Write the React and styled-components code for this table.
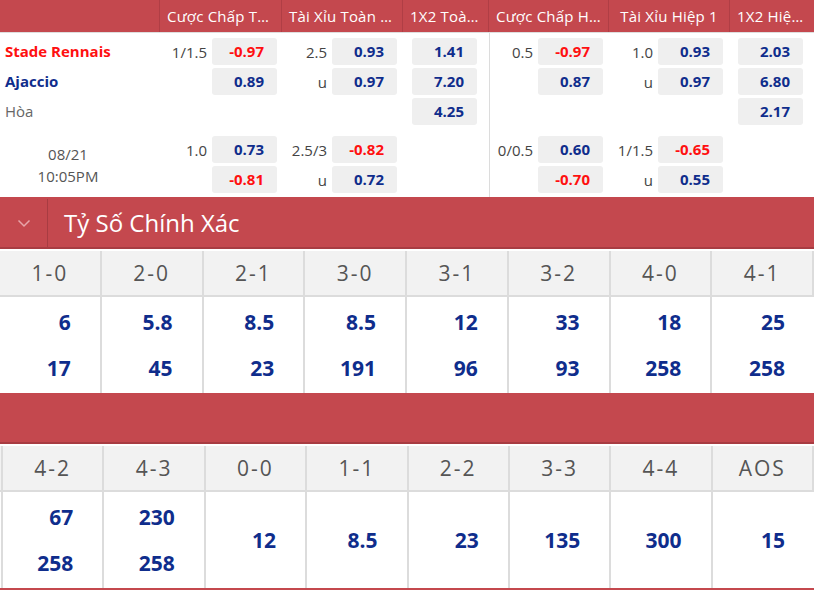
import React from "react";
import styled, { createGlobalStyle } from "styled-components";

const GlobalStyle = createGlobalStyle`
  html, body {
    margin: 0;
    padding: 0;
    background: #ffffff;
    font-family: "Open Sans", "Noto Sans", "DejaVu Sans", sans-serif;
  }
`;

const RED = "#c4484e";
const RED_DARK = "#a83c42";
const BLUE = "#0f2d8c";

const Page = styled.div`
  width: 814px;
  height: 590px;
  overflow: hidden;
`;

/* ---------- odds table ---------- */

const OddsTable = styled.div`
  border-bottom: 2px solid ${RED};
`;

const HeaderRow = styled.div`
  display: flex;
  height: 32px;
  background: ${RED};
  border-bottom: 1px solid #dedede;
`;

const HeadCell = styled.div`
  width: ${(p) => p.w}px;
  flex: none;
  box-sizing: border-box;
  border-right: ${(p) => (p.last ? "none" : "1px solid #b03e45")};
  color: #ffffff;
  font-size: 15px;
  letter-spacing: 0.2px;
  line-height: 32px;
  padding: 0 7px;
  text-align: center;
  white-space: nowrap;
  overflow: hidden;
  text-overflow: ellipsis;
`;

const Body = styled.div`
  display: flex;
  height: 164px;
`;

const Group = styled.div`
  display: flex;
  border-left: ${(p) => (p.divider ? "1px solid #dcdcdc" : "none")};
`;

const Column = styled.div`
  width: ${(p) => p.w}px;
  flex: none;
  box-sizing: border-box;
  padding: 5px ${(p) => p.pr}px 0 ${(p) => p.pl || 0}px;
  display: flex;
  flex-direction: column;
  gap: 11px;
`;

const Block = styled.div`
  display: flex;
  flex-direction: column;
  gap: 3px;
`;

const Slot = styled.div`
  height: 27px;
  display: flex;
  align-items: center;
  justify-content: ${(p) => (p.start ? "flex-start" : "flex-end")};
  gap: 5px;
`;

const Line = styled.span`
  font-size: 15px;
  color: #444444;
`;

const Price = styled.div`
  width: 65px;
  height: 27px;
  box-sizing: border-box;
  background: #efefef;
  border-radius: 3px;
  padding-right: 13px;
  text-align: right;
  line-height: 27px;
  font-size: 15px;
  font-weight: 700;
  color: ${(p) => (p.neg ? "#ff1010" : BLUE)};
`;

const TeamCol = styled.div`
  width: 160px;
  flex: none;
  padding-top: 5px;
  display: flex;
  flex-direction: column;
  gap: 11px;
`;

const Team = styled.div`
  height: 27px;
  line-height: 27px;
  padding-left: 5px;
  font-size: 15px;
  font-weight: ${(p) => (p.draw ? 400 : 700)};
  color: ${(p) => p.color};
`;

const DateBox = styled.div`
  height: 57px;
  display: flex;
  flex-direction: column;
  justify-content: center;
  align-items: center;
  color: #555555;
  font-size: 15px;
  line-height: 22px;
  padding-right: 24px;
`;

/* ---------- correct score ---------- */

const TitleBar = styled.div`
  display: flex;
  height: 48px;
  background: ${RED};
  border-bottom: 2px solid ${RED_DARK};
`;

const Toggle = styled.div`
  width: 47px;
  flex: none;
  border-right: 1px solid ${RED_DARK};
  display: flex;
  align-items: center;
  justify-content: center;
`;

const Title = styled.div`
  color: #ffffff;
  font-size: 24px;
  line-height: 48px;
  padding-left: 16px;
`;

const ScoreGrid = styled.div`
  display: grid;
  grid-template-columns: ${(p) => (p.lead ? `${p.lead}px ` : "")}repeat(8, 1fr);
  grid-template-rows: 46px 96px;
  background: #ffffff;
  border-top: 2px solid #ffffff;
`;

const ScoreHead = styled.div`
  background: #f2f2f2;
  border-right: 2px solid #dcdcdc;
  border-bottom: 2px solid #dcdcdc;
  color: #555555;
  font-size: 21px;
  display: flex;
  align-items: center;
  justify-content: center;
  letter-spacing: 2px;
  &:last-child {
    border-right: none;
  }
`;

const ScoreCell = styled.div`
  border-right: ${(p) => (p.last ? "none" : "2px solid #dcdcdc")};
  display: flex;
  flex-direction: column;
  justify-content: center;
  align-items: flex-end;
  padding-right: 29px;
`;

const ScoreValue = styled.div`
  font-size: 21px;
  font-weight: 700;
  color: ${BLUE};
  line-height: 46px;
`;

const Spacer = styled.div`
  border-right: 2px solid #dcdcdc;
  background: ${(p) => (p.head ? "#f2f2f2" : "#ffffff")};
  border-bottom: ${(p) => (p.head ? "2px solid #dcdcdc" : "none")};
`;

const EmptyBar = styled.div`
  height: 48px;
  background: ${RED};
  border-top: 1px solid ${RED};
  border-bottom: 2px solid ${RED_DARK};
`;

const BottomLine = styled.div`
  height: 2px;
  background: ${RED};
`;

const headers = [
  { t: "", w: 160 },
  { t: "Cược Chấp Toàn Trận", w: 122 },
  { t: "Tài Xỉu Toàn Trận", w: 121 },
  { t: "1X2 Toàn Trận", w: 86 },
  { t: "Cược Chấp Hiệp 1", w: 120 },
  { t: "Tài Xỉu Hiệp 1", w: 121 },
  { t: "1X2 Hiệp 1", w: 84 },
];

const full = [
  {
    w: 122, pr: 5,
    a: [{ l: "1/1.5", v: "-0.97" }, { v: "0.89" }, null],
    b: [{ l: "1.0", v: "0.73" }, { v: "-0.81" }],
  },
  {
    w: 121, pr: 6,
    a: [{ l: "2.5", v: "0.93" }, { l: "u", v: "0.97" }, null],
    b: [{ l: "2.5/3", v: "-0.82" }, { l: "u", v: "0.72" }],
  },
  {
    w: 86, pr: 0, pl: 9, start: true,
    a: [{ v: "1.41" }, { v: "7.20" }, { v: "4.25" }],
    b: [null, null],
  },
];

const half = [
  {
    w: 119, pr: 6,
    a: [{ l: "0.5", v: "-0.97" }, { v: "0.87" }, null],
    b: [{ l: "0/0.5", v: "0.60" }, { v: "-0.70" }],
  },
  {
    w: 121, pr: 7,
    a: [{ l: "1.0", v: "0.93" }, { l: "u", v: "0.97" }, null],
    b: [{ l: "1/1.5", v: "-0.65" }, { l: "u", v: "0.55" }],
  },
  {
    w: 84, pr: 0, pl: 8, start: true,
    a: [{ v: "2.03" }, { v: "6.80" }, { v: "2.17" }],
    b: [null, null],
  },
];

const scoresA = [
  { s: "1-0", v: ["6", "17"] },
  { s: "2-0", v: ["5.8", "45"] },
  { s: "2-1", v: ["8.5", "23"] },
  { s: "3-0", v: ["8.5", "191"] },
  { s: "3-1", v: ["12", "96"] },
  { s: "3-2", v: ["33", "93"] },
  { s: "4-0", v: ["18", "258"] },
  { s: "4-1", v: ["25", "258"] },
];

const scoresB = [
  { s: "4-2", v: ["67", "258"] },
  { s: "4-3", v: ["230", "258"] },
  { s: "0-0", v: ["12"] },
  { s: "1-1", v: ["8.5"] },
  { s: "2-2", v: ["23"] },
  { s: "3-3", v: ["135"] },
  { s: "4-4", v: ["300"] },
  { s: "AOS", v: ["15"] },
];

const isNeg = (v) => v.startsWith("-");

const renderSlot = (cell, i, start) => (
  <Slot key={i} start={start}>
    {cell && cell.l && <Line>{cell.l}</Line>}
    {cell && <Price neg={isNeg(cell.v)}>{cell.v}</Price>}
  </Slot>
);

const MarketColumn = ({ col }) => (
  <Column w={col.w} pr={col.pr} pl={col.pl}>
    <Block>{col.a.map((c, i) => renderSlot(c, i, col.start))}</Block>
    <Block>{col.b.map((c, i) => renderSlot(c, i, col.start))}</Block>
  </Column>
);

const Chevron = () => (
  <svg width="14" height="9" viewBox="0 0 14 9">
    <path d="M1.5 1.5 L7 7 L12.5 1.5" fill="none" stroke="#e8a5a9" strokeWidth="1.5" />
  </svg>
);

const Scores = ({ items, lead }) => (
  <ScoreGrid lead={lead}>
    {lead ? <Spacer head /> : null}
    {items.map((it) => (
      <ScoreHead key={it.s}>{it.s}</ScoreHead>
    ))}
    {lead ? <Spacer /> : null}
    {items.map((it, i) => (
      <ScoreCell key={it.s} last={i === items.length - 1}>
        {it.v.map((v, j) => (
          <ScoreValue key={j}>{v}</ScoreValue>
        ))}
      </ScoreCell>
    ))}
  </ScoreGrid>
);

const App = () => {
  return (
    <Page>
      <GlobalStyle />
      <OddsTable>
        <HeaderRow>
          {headers.map((h, i) => (
            <HeadCell key={i} w={h.w} last={i === headers.length - 1}>
              {h.t}
            </HeadCell>
          ))}
        </HeaderRow>
        <Body>
          <TeamCol>
            <Block>
              <Team color="#ff1010">Stade Rennais</Team>
              <Team color={BLUE}>Ajaccio</Team>
              <Team draw color="#666666">Hòa</Team>
            </Block>
            <DateBox>
              <span>08/21</span>
              <span>10:05PM</span>
            </DateBox>
          </TeamCol>
          <Group>
            {full.map((c, i) => (
              <MarketColumn key={i} col={c} />
            ))}
          </Group>
          <Group divider>
            {half.map((c, i) => (
              <MarketColumn key={i} col={c} />
            ))}
          </Group>
        </Body>
      </OddsTable>
      <TitleBar>
        <Toggle>
          <Chevron />
        </Toggle>
        <Title>Tỷ Số Chính Xác</Title>
      </TitleBar>
      <Scores items={scoresA} />
      <EmptyBar />
      <Scores items={scoresB} lead={3} />
      <BottomLine />
    </Page>
  );
};

export default App;
